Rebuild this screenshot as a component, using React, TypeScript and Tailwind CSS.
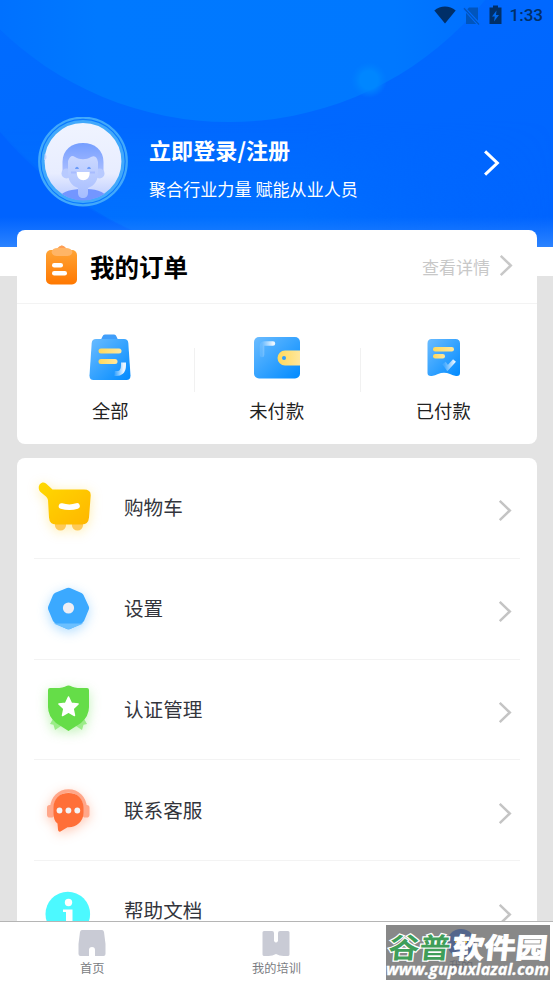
import type { ReactNode } from "react";

function Chevron({ className }: { className?: string }) {
  return (
    <svg viewBox="0 0 14 24" className={className} fill="none" stroke="currentColor">
      <path d="M1.5 2 12 12 1.5 22" strokeWidth="2.6" />
    </svg>
  );
}

function StatusBar() {
  return (
    <div className="flex h-[30px] items-center justify-end pr-[10px] text-[#002f68]">
      <svg width="22" height="18" viewBox="0 0 22 18" className="mr-[7px]" fill="currentColor">
        <path d="M.3 4.500C6.500-1 15.500-1 21.700 4.500L11 17.500Z" />
      </svg>
      <svg width="18" height="19" viewBox="0 0 18 19" className="mr-2" fill="none">
        <path d="M6 1.500h9V18H3V4.500Z" fill="#0055bd" />
        <path d="M1 2.200 16 18.500" stroke="#006dff" strokeWidth="3.400" />
        <path d="M1 2.200 16 18.500" stroke="#0055bd" strokeWidth="1.300" />
      </svg>
      <svg width="13" height="20" viewBox="0 0 13 20" className="mr-2" fill="currentColor">
        <path d="M4 .5h5v2h3.500V19H.5V2.500H4Z" />
        <path d="M7.500 5.500 3 11.500h2.800L5 16.500l5-6.500H7Z" fill="#0068e9" />
      </svg>
      <span className="font-['Roboto',sans-serif] text-[17px] leading-none font-medium">
        1:33
      </span>
    </div>
  );
}

function Avatar() {
  return (
    <svg width="90" height="90" viewBox="0 0 90 90">
      <defs>
        <linearGradient id="face-bg" x2="0" y2="1">
          <stop stopColor="#f0f4ff" />
          <stop offset=".65" stopColor="#e8edff" />
          <stop offset="1" stopColor="#b7c8ff" />
        </linearGradient>
        <linearGradient id="hair" x2="0" y2="1">
          <stop stopColor="#759eff" />
          <stop offset="1" stopColor="#a9bdff" />
        </linearGradient>
        <linearGradient id="skin" x2="0" y2="1">
          <stop stopColor="#cbd8ff" />
          <stop offset="1" stopColor="#a6bdff" />
        </linearGradient>
        <clipPath id="avatar-clip">
          <circle cx="45" cy="44.500" r="39" />
        </clipPath>
      </defs>
      <circle cx="45" cy="44.500" r="43.800" fill="#0a79ff" stroke="#42a9fb" strokeWidth="2.200" />
      <circle cx="45" cy="44.500" r="40" fill="url(#face-bg)" stroke="#42a9fb" strokeWidth="3.200" />
      <g clipPath="url(#avatar-clip)">
        <circle cx="5.500" cy="40" r="3" fill="#c8d4fb" />
        <path d="M20 84c1-9 11-11 21-12h8c11 0 20 4 23 12Z" fill="#7396ff" />
        <path d="M24.500 55V45c0-12 9-19 20.500-19s20.500 7 20.500 19v10Z" fill="url(#hair)" />
        <circle cx="28.500" cy="56.500" r="5" fill="#b8caff" />
        <circle cx="61.500" cy="56.500" r="5" fill="#b8caff" />
        <path
          d="M30 44c2-5 4-6 7-4 5 3 11 3 16 0 4-2 6 0 7 5v11c0 8-4 13-10 15v5c0 3-2 5-5 5s-5-2-5-5v-5c-6-2-10-7-10-15Z"
          fill="url(#skin)"
        />
        <path d="M37 52c1-3 3-3 4 0ZM49 52c1-3 3-3 4 0Z" fill="#6b9bf8" />
        <path d="M33 54.500h5v2h-5ZM52 54.500h5v2h-5Z" fill="#a8bcff" />
        <path d="M39 55h12.500c1.500 11-14 11-12.500 0Z" fill="#fff" />
      </g>
    </svg>
  );
}

function HeaderBackdrop() {
  return (
    <svg className="absolute inset-0" width="553" height="247" viewBox="0 0 553 247">
      <defs>
        <linearGradient id="sky" x1="0" x2="1" y2="1">
          <stop stopColor="#006cff" />
          <stop offset="1" stopColor="#0064ff" />
        </linearGradient>
        <linearGradient id="disc">
          <stop offset=".08" stopColor="#006dff" />
          <stop offset=".3" stopColor="#0079ff" />
          <stop offset=".75" stopColor="#0078ff" />
          <stop offset=".9" stopColor="#006eff" />
        </linearGradient>
        <linearGradient id="wave" x2="1" y2="0">
          <stop stopColor="#0074ff" />
          <stop offset=".55" stopColor="#0072ff" />
          <stop offset="1" stopColor="#0068ff" stopOpacity="0" />
        </linearGradient>
        <linearGradient id="wave-fade" x2="0" y2="1">
          <stop stopColor="#000" />
          <stop offset="1" stopColor="#fff" />
        </linearGradient>
        <mask id="wave-mask">
          <path d="M0 120H553V247H0Z" fill="url(#wave-fade)" />
        </mask>
        <linearGradient id="floor" x2="0" y2="1">
          <stop stopColor="#2680ff" stopOpacity="0" />
          <stop offset="1" stopColor="#2c83ff" />
        </linearGradient>
        <radialGradient id="spot">
          <stop offset=".5" stopColor="#0086ff" />
          <stop offset="1" stopColor="#0080ff" stopOpacity="0" />
        </radialGradient>
      </defs>
      <path d="M0 0H553V247H0Z" fill="url(#sky)" />
      <circle cx="229" cy="-208" r="330" fill="url(#disc)" />
      <path d="M0 132Q70 215 175 247H0Z" fill="#0063ff" />
      <path d="M0 130Q75 215 175 247H553V120Z" fill="url(#wave)" mask="url(#wave-mask)" />
      <path d="M0 217H553V247H0Z" fill="url(#floor)" />
      <circle cx="369" cy="80" r="18" fill="url(#spot)" />
    </svg>
  );
}

function BlueDefs() {
  return (
    <svg className="absolute size-0">
      <defs>
        <linearGradient id="blue" x2="1" y2="1">
          <stop stopColor="#6bbcff" />
          <stop offset="1" stopColor="#008aff" />
        </linearGradient>
        <linearGradient id="yellow">
          <stop stopColor="#ffd95a" />
          <stop offset="1" stopColor="#ffe79d" />
        </linearGradient>
        <linearGradient id="shine" x2="1" y2="0">
          <stop stopColor="#fff" stopOpacity=".1" />
          <stop offset="1" stopColor="#fff" stopOpacity=".9" />
        </linearGradient>
      </defs>
    </svg>
  );
}

function AllIcon() {
  return (
    <svg width="42" height="48" viewBox="0 0 42 48">
      <path d="M11 6c2 0 2-5.500 5-5.500h9c3 0 3 5.500 5 5.500v4H11Z" fill="#409efa" />
      <path d="M7 5h28q4 0 4.300 4L41.500 41.500q0 4.500-4 4.500H4.500q-4 0-4-4.500L2.700 9q.3-4 4.300-4Z" fill="url(#blue)" />
      <rect x="9.500" y="14.500" width="23" height="5" rx="2.500" fill="url(#yellow)" />
      <rect x="9.500" y="25" width="19" height="5" rx="2.500" fill="url(#yellow)" />
      <path d="M25.500 39.500q9 1 9-8V28.500" fill="none" stroke="url(#shine)" strokeWidth="5" />
    </svg>
  );
}

function WalletIcon() {
  return (
    <svg width="46" height="42" viewBox="0 0 46 42">
      <rect width="46" height="41.500" rx="5" fill="url(#blue)" />
      <path d="M8 18V9q0-2.500 3-2.500h8" fill="none" stroke="url(#shine)" strokeWidth="4.500" strokeLinecap="round" />
      <path d="M46 13.500V28.500H31a7.500 7.500 0 0 1 0-15Z" fill="url(#yellow)" />
      <circle cx="30" cy="21" r="2" fill="#2e9eff" />
    </svg>
  );
}

function PaidIcon() {
  return (
    <svg width="33" height="38" viewBox="0 0 33 38">
      <path d="M4.500 0h24Q33 0 33 4.500V34q0 3.500-4 3-3-.7-6-2-6-2.500-12 0-3 1.300-6 2-4.500.5-4.500-3V4.500Q.5 0 4.500 0Z" fill="url(#blue)" />
      <rect x="6" y="8" width="21" height="4.500" rx="2.200" fill="url(#yellow)" />
      <rect x="6" y="15" width="12" height="4.500" rx="2.200" fill="url(#yellow)" />
      <path d="m17 24 3.500 5 7-7.500" fill="none" stroke="url(#shine)" strokeWidth="4" />
    </svg>
  );
}

function OrderIcon() {
  return (
    <svg width="32" height="40" viewBox="0 0 32 40" className="-mt-[3px]">
      <defs>
        <linearGradient id="orange" x2="0" y2="1">
          <stop stopColor="#ffa436" />
          <stop offset="1" stopColor="#ff7800" />
        </linearGradient>
      </defs>
      <rect y="5" width="31" height="34.500" rx="5" fill="url(#orange)" />
      <path d="M5.500 7q1-4 6-4 4-5 8 0 6 0 7 4-1 4-5 4h-11q-4 0-5-4Z" fill="#ffb566" />
      <path d="M12 3q4-5 8 0Z" fill="#ff9e55" />
      <rect x="6" y="18" width="11" height="4.400" rx="2.200" fill="#fff" />
      <rect x="6" y="26" width="15" height="4.400" rx="2.200" fill="#fff" />
    </svg>
  );
}

function CartIcon() {
  return (
    <svg width="64" height="60" viewBox="0 0 64 60" className="overflow-visible drop-shadow-[0_2px_6px_#ffc80050]">
      <defs>
        <linearGradient id="cart" x2="1" y2="1">
          <stop stopColor="#ffd900" />
          <stop offset="1" stopColor="#ffb600" />
        </linearGradient>
      </defs>
      <circle cx="28.500" cy="47" r="5.600" fill="#ffca58" />
      <circle cx="45.500" cy="47" r="5.600" fill="#ffca58" />
      <path
        d="M14 5.500 20.500 11.500H52q7 0 6.700 6L57 39.500q-.6 7-7 7H24q-6.500 0-7-7L16 22q-.3-2-2-3.500L8.500 14C4 9 9 2 14 5.500Z"
        fill="url(#cart)"
      />
      <path d="M29.500 28q8 2.500 15.500 0" fill="none" stroke="#fff" strokeWidth="5.600" strokeLinecap="round" />
    </svg>
  );
}

function SettingsIcon() {
  return (
    <svg width="64" height="60" viewBox="0 0 64 60" className="overflow-visible drop-shadow-[0_3px_6px_#39a9ff65]">
      <path
        d="M35 9q1.500-.7 3 0l11.500 5q1.500.8 2 2L56.800 27.500q.7 1.500 0 3L52 42l-2.500 2.800L38 50q-1.500.6-3 0l-11.500-5.200L21 42l-4.800-11.500q-.5-1.500 0-3L21 16q.8-1.500 2.300-2.200Z"
        fill="#3ba9ff"
      />
      <path d="M21.500 44.500h30L38 50q-1.500.6-3 0Z" fill="#6cc0ff" />
      <circle cx="36.500" cy="29" r="5.600" fill="#eeeef5" />
    </svg>
  );
}

function ShieldIcon() {
  return (
    <svg width="64" height="60" viewBox="0 0 64 60" className="overflow-visible drop-shadow-[0_3px_6px_#63dd4965]">
      <path d="m22 38-4 7 3.500.8 1.500 5.200 9-6ZM51 38l4 7-3.500.8L50 51l-9-6Z" fill="#9bec88" />
      <path
        d="M18 9h6q7 0 11-2.300 1.500-.6 3 0Q42 9 49 9h6q2 0 2 2v17q0 9-8 16l-12.500 8L24 44q-8-7-8-16V11q0-2 2-2Z"
        fill="#65dd48"
      />
      <path
        d="m36.500 18 2.900 6.200 6.700.8-5 4.600 1.400 6.900-6-3.500-6 3.500 1.400-6.900-5-4.600 6.700-.8Z"
        fill="#fff"
        stroke="#fff"
        strokeWidth="1.500"
        strokeLinejoin="round"
      />
    </svg>
  );
}

function ServiceIcon() {
  return (
    <svg width="64" height="60" viewBox="0 0 64 60" className="overflow-visible drop-shadow-[0_3px_6px_#ff703a60]">
      <path d="M20 31v-3.500a16.500 16.500 0 0 1 33 0V31" fill="none" stroke="#ffa78a" strokeWidth="3.500" />
      <rect x="15" y="25" width="7" height="12.500" rx="2.800" fill="#ffa78a" />
      <rect x="50.500" y="25" width="7" height="12.500" rx="2.800" fill="#ffa78a" />
      <path
        d="M36.500 13c9 0 15 6 15 14.500V33c0 9-8 15-16 14.300l-7 4.200q-2.500.7-2.500-2l-.5-6c-3-2-4-6-4-10v-6C21.500 19 27.500 13 36.500 13Z"
        fill="#ff6f38"
      />
      <g fill="#f4f4f7">
        <circle cx="27.500" cy="30.500" r="2.900" />
        <circle cx="36.400" cy="30.500" r="2.900" />
        <circle cx="45.300" cy="30.500" r="2.900" />
      </g>
    </svg>
  );
}

function HelpIcon() {
  return (
    <svg width="64" height="60" viewBox="0 0 64 60">
      <circle cx="35.800" cy="33" r="22.300" fill="#4cf9ff" />
      <circle cx="36.500" cy="21.500" r="3.700" fill="#fff" />
      <path d="M31 28.500h9.500V46H34V31h-3Z" fill="#fff" />
    </svg>
  );
}

const orders: { label: string; icon: ReactNode }[] = [
  { label: "全部", icon: <AllIcon /> },
  { label: "未付款", icon: <WalletIcon /> },
  { label: "已付款", icon: <PaidIcon /> },
];

const menu: { label: string; icon: ReactNode }[] = [
  { label: "购物车", icon: <CartIcon /> },
  { label: "设置", icon: <SettingsIcon /> },
  { label: "认证管理", icon: <ShieldIcon /> },
  { label: "联系客服", icon: <ServiceIcon /> },
  { label: "帮助文档", icon: <HelpIcon /> },
];

function Watermark() {
  return (
    <div className="absolute top-[3px] left-[386px] h-[55px] w-[164px] overflow-hidden bg-[#888888]">
      <svg width="164" height="55" viewBox="0 0 164 55">
        <circle cx="75" cy="18" r="14" fill="#53658c" />
        <path d="M69 17h3M78 17h3" stroke="#d5ae4d" strokeWidth="2" />
        <text x="63" y="46" fontSize="12" fill="#6a6d76">
          我的
        </text>
        <g fontSize="28" fontWeight="700" stroke="#fff" paintOrder="stroke" transform="skewX(-6)">
          <text x="5" y="33" fill="#3f9e59" strokeWidth="2.4" textLength="62" lengthAdjust="spacingAndGlyphs">
            谷普
          </text>
          <text x="69" y="33" fill="#fff" strokeWidth="1" textLength="95" lengthAdjust="spacingAndGlyphs">
            软件园
          </text>
        </g>
        <text
          x="0"
          y="50"
          fill="#fff"
          stroke="#fff"
          strokeWidth=".3"
          fontFamily="Open Sans, sans-serif"
          fontSize="16"
          fontWeight="700"
          fontStyle="italic"
          textLength="163"
          lengthAdjust="spacingAndGlyphs"
        >
          www.gupuxlazal.com
        </text>
      </svg>
    </div>
  );
}

function TabBar() {
  return (
    <nav className="relative h-[62px] shrink-0 border-t border-[#b5b5b5] bg-white text-[12.2px] leading-[18px] text-[#7a7c82]">
      <div className="grid h-full grid-cols-3">
        <div className="flex flex-col items-center pt-2">
          <svg width="28" height="26" viewBox="0 0 28 26" fill="#c9cbd5">
            <path d="M4 0h20q1.500 0 2 2L27.500 14v10q0 2-2 2H17v-6q0-3-3-3t-3 3v6H2.500q-2 0-2-2V14l1.500-12Q2.500 0 4 0Z" />
          </svg>
          <span className="mt-[3px]">首页</span>
        </div>
        <div className="flex flex-col items-center pt-2">
          <svg width="28" height="26" viewBox="0 0 28 26" fill="#c9cbd5">
            <path d="M2 1h8q2 0 2 2v8q2 3 4 0V3q0-2 2-2h8q1.500 0 1.500 1.500v22q0 1.500-2 1.500h-4q-4 0-7.500-2-3.500 2-7.500 2h-4q-2 0-2-1.500v-22Q.5 1 2 1Z" />
          </svg>
          <span className="mt-[3px]">我的培训</span>
        </div>
      </div>
      <Watermark />
    </nav>
  );
}

export default function App() {
  return (
    <div className="flex h-[983px] w-[553px] flex-col overflow-hidden bg-white font-['Noto_Sans_CJK_SC',sans-serif]">
      <BlueDefs />
      <header className="relative h-[247px] shrink-0">
        <HeaderBackdrop />
        <div className="relative">
          <StatusBar />
          <div className="mt-[87px] flex items-start pl-[38px]">
            <Avatar />
            <div className="ml-[21px] pt-[16px] text-white">
              <h1 className="text-[22.1px] leading-8 font-bold">立即登录/注册</h1>
              <p className="mt-[12px] text-[17.1px] leading-6">聚合行业力量 赋能从业人员</p>
            </div>
            <Chevron className="mt-[32px] mr-[53px] ml-auto h-[28px] w-[17px] text-white" />
          </div>
        </div>
      </header>

      <main className="min-h-0 flex-1 bg-[linear-gradient(#fff_29px,#e3e3e3_29px)] pr-4 pl-[17px]">
        <section className="relative -mt-[17px] h-[213.5px] rounded-lg bg-white">
          <div className="flex h-[74px] items-center border-b border-[#f3f3f3] pr-[24px] pl-[29px]">
            <OrderIcon />
            <h2 className="ml-[12px] text-[24.5px] leading-9 font-bold text-black">我的订单</h2>
            <span className="ml-auto text-[17px] leading-6 text-[#c8c8c8]">查看详情</span>
            <Chevron className="-mt-[3px] ml-[9px] h-[23px] w-[14px] text-[#c8c8c8]" />
          </div>
          <div className="flex pt-[30px] pl-[10px]">
            {orders.map((o, i) => (
              <div key={o.label} className="flex w-[166.5px] items-start">
                <div className="flex flex-1 flex-col items-center">
                  <div className="flex h-[48px] items-center">{o.icon}</div>
                  <span className="mt-[15px] text-[18.3px] leading-[26px] text-[#222]">{o.label}</span>
                </div>
                {i < 2 && <div className="-mr-px mt-[14px] h-[44px] w-px bg-[#f1f1f1]" />}
              </div>
            ))}
          </div>
        </section>

        <section className="mt-[14.5px] h-[463px] overflow-hidden rounded-t-lg bg-white px-[17px]">
          {menu.map((m) => (
            <div key={m.label} className="flex h-[100.8px] items-center border-b border-[#f3f3f3]">
              <div className="-ml-[2px] shrink-0">{m.icon}</div>
              <span className="-mt-[2px] ml-[28px] text-[19.6px] text-[#33353c]">{m.label}</span>
              <Chevron className="mt-[6px] mr-[8px] ml-auto h-[23px] w-[14px] text-[#c4c4c4]" />
            </div>
          ))}
        </section>
      </main>

      <TabBar />
    </div>
  );
}
